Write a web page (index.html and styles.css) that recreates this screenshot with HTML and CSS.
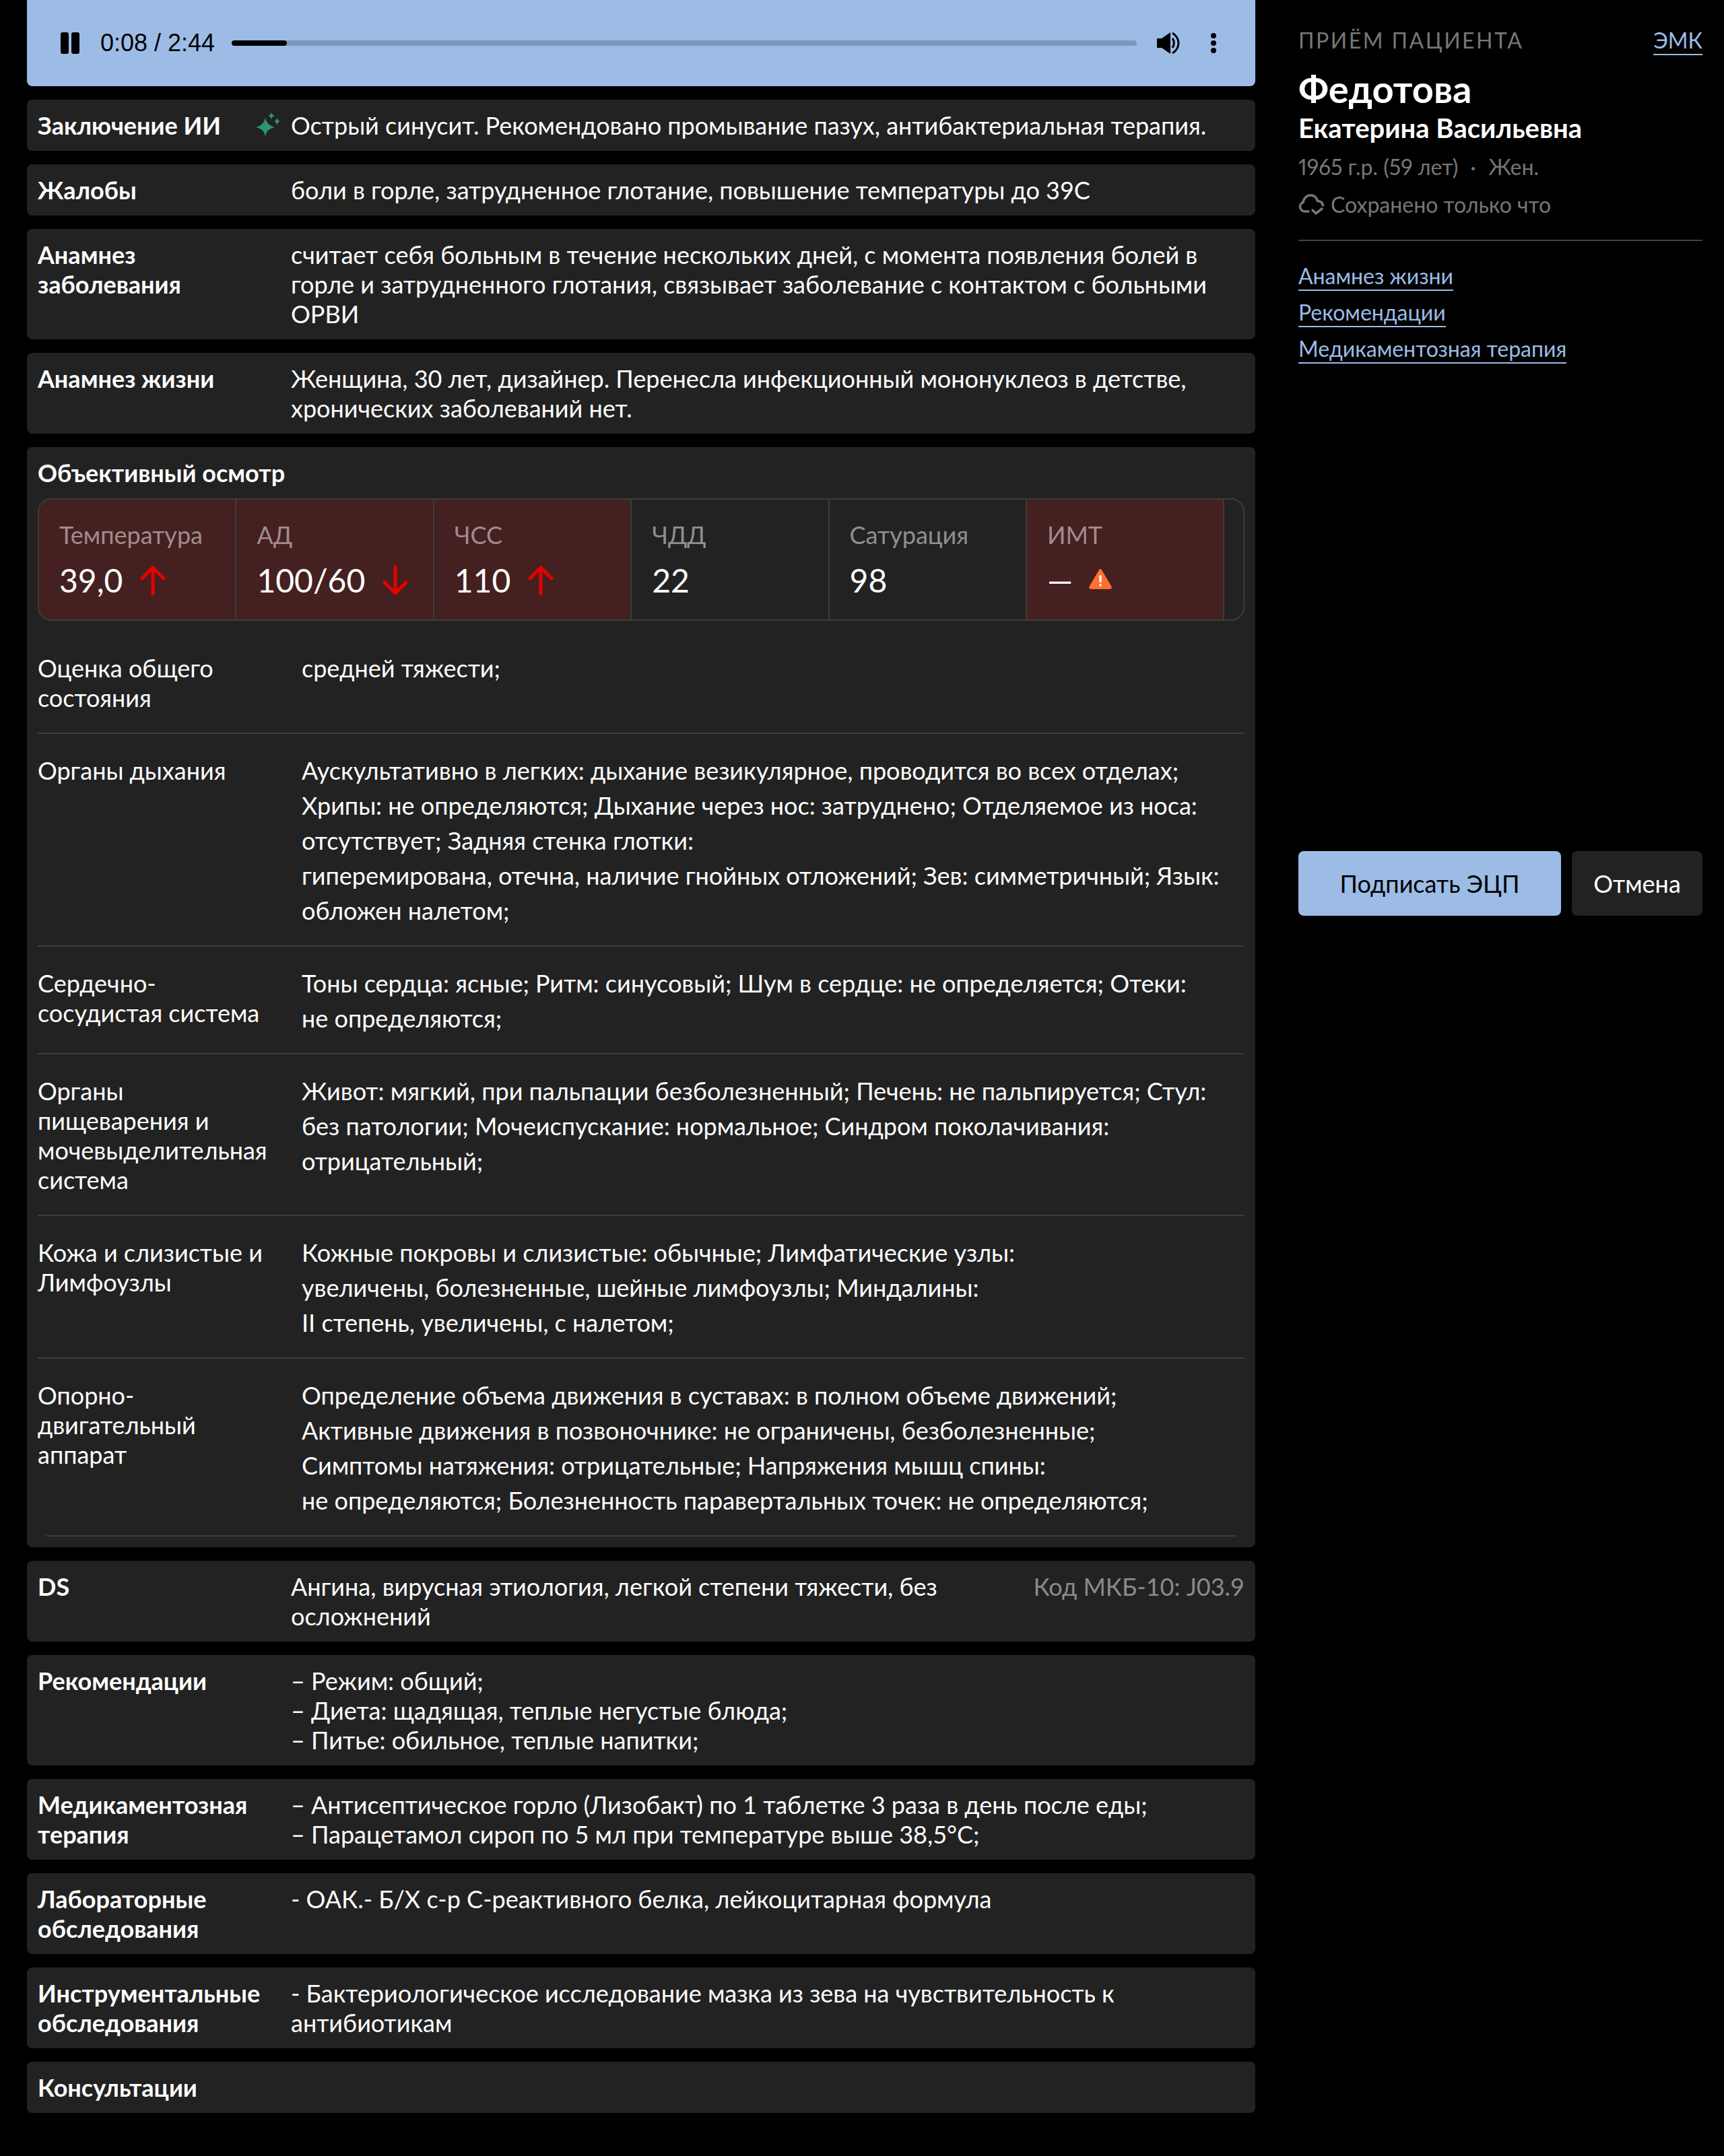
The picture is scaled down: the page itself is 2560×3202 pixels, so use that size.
FILE: index.html
```html
<!doctype html>
<html lang="ru">
	<head>
		<meta charset="utf-8">
		<title>Приём пациента</title>
		<link rel="stylesheet" href="styles.css">
	</head>
	<body>
		<div class="page">
			<main class="content">
				<div class="player">
					<svg class="player-pause" viewBox="0 0 28 32"><rect x="0" y="0" width="12" height="32" rx="3"/><rect x="16" y="0" width="12" height="32" rx="3"/></svg>
					<span class="player-time">0:08 / 2:44</span>
					<div class="player-track"><div class="player-progress"></div></div>
					<svg class="player-volume" viewBox="0 0 36 32"><path d="M0 9h7L20 0v32L7 23H0z"/><path d="M23 9c3 4 3 10 0 14" fill="none" stroke="#000" stroke-width="3"/><path d="M23 1c12 8 12 22 0 30" fill="none" stroke="#000" stroke-width="3"/></svg>
					<svg class="player-menu" viewBox="0 0 8 30"><circle cx="4" cy="4" r="4"/><circle cx="4" cy="15" r="4"/><circle cx="4" cy="26" r="4"/></svg>
				</div>

				<div class="row">
					<div class="row-label">Заключение ИИ</div>
					<div class="row-value ai-value">
						<svg class="ai-icon" viewBox="0 0 36 36"><path fill="#2c9470" d="M14 8Q16 19 28 22 16 24 14 36 12 24 0 22 12 19 14 8z"/><path fill="#2c9470" d="M23 0Q24 4 28 5 24 6 23 10 22 6 18 5 22 4 23 0zM31.500 8Q32.500 12 36 13 32.500 14 31.500 19 30.500 14 27 13 30.500 12 31.500 8z"/></svg>
						Острый синусит. Рекомендовано промывание пазух, антибактериальная терапия.
					</div>
				</div>
				<div class="row">
					<div class="row-label">Жалобы</div>
					<div class="row-value">боли в горле, затрудненное глотание, повышение температуры до 39С</div>
				</div>
				<div class="row">
					<div class="row-label">Анамнез заболевания</div>
					<div class="row-value">считает себя больным в течение нескольких дней, с момента появления болей в<br>горле и затрудненного глотания, связывает заболевание с контактом с больными<br>ОРВИ</div>
				</div>
				<div class="row">
					<div class="row-label">Анамнез жизни</div>
					<div class="row-value">Женщина, 30 лет, дизайнер. Перенесла инфекционный мононуклеоз в детстве,<br>хронических заболеваний нет.</div>
				</div>

				<section class="exam">
					<div class="row-label">Объективный осмотр</div>
					<div class="metrics">
						<div class="metric alert">
							<div class="metric-name">Температура</div>
							<div class="metric-value">39,0 <svg class="arrow" viewBox="0 0 38 44"><path d="M19 42V3M3 19L19 3l16 16" fill="none" stroke="#e60000" stroke-width="5" stroke-linecap="round" stroke-linejoin="round"/></svg></div>
						</div>
						<div class="metric alert">
							<div class="metric-name">АД</div>
							<div class="metric-value">100/60 <svg class="arrow" viewBox="0 0 38 44"><path d="M19 2v39M3 25l16 16 16-16" fill="none" stroke="#e60000" stroke-width="5" stroke-linecap="round" stroke-linejoin="round"/></svg></div>
						</div>
						<div class="metric alert">
							<div class="metric-name">ЧСС</div>
							<div class="metric-value">110 <svg class="arrow" viewBox="0 0 38 44"><path d="M19 42V3M3 19L19 3l16 16" fill="none" stroke="#e60000" stroke-width="5" stroke-linecap="round" stroke-linejoin="round"/></svg></div>
						</div>
						<div class="metric">
							<div class="metric-name">ЧДД</div>
							<div class="metric-value">22</div>
						</div>
						<div class="metric">
							<div class="metric-name">Сатурация</div>
							<div class="metric-value">98</div>
						</div>
						<div class="metric alert">
							<div class="metric-name">ИМТ</div>
							<div class="metric-value">— <svg class="warn" viewBox="0 0 34 30"><path fill="#ff6f32" d="M17 0c1 0 1.600.6 2 1.500L33.500 26c.8 2-.2 4-2.500 4H3c-2.300 0-3.300-2-2.500-4L15 1.500C15.400.6 16 0 17 0z"/><rect x="15.300" y="9" width="3.400" height="11" rx="1.700" fill="#fff"/><circle cx="17" cy="24" r="1.900" fill="#fff"/></svg></div>
						</div>
					</div>

					<div class="exam-row">
						<div class="exam-label">Оценка общего состояния</div>
						<div class="exam-value">средней тяжести;</div>
					</div>
					<div class="exam-row">
						<div class="exam-label">Органы дыхания</div>
						<div class="exam-value">Аускультативно в легких: дыхание везикулярное, проводится во всех отделах;<br>Хрипы: не определяются; Дыхание через нос: затруднено; Отделяемое из носа:<br>отсутствует; Задняя стенка глотки:<br>гиперемирована, отечна, наличие гнойных отложений; Зев: симметричный; Язык:<br>обложен налетом;</div>
					</div>
					<div class="exam-row">
						<div class="exam-label">Сердечно-сосудистая система</div>
						<div class="exam-value">Тоны сердца: ясные; Ритм: синусовый; Шум в сердце: не определяется; Отеки:<br>не определяются;</div>
					</div>
					<div class="exam-row">
						<div class="exam-label">Органы пищеварения и мочевыделительная система</div>
						<div class="exam-value">Живот: мягкий, при пальпации безболезненный; Печень: не пальпируется; Стул:<br>без патологии; Мочеиспускание: нормальное; Синдром поколачивания:<br>отрицательный;</div>
					</div>
					<div class="exam-row">
						<div class="exam-label">Кожа и слизистые и Лимфоузлы</div>
						<div class="exam-value">Кожные покровы и слизистые: обычные; Лимфатические узлы:<br>увеличены, болезненные, шейные лимфоузлы; Миндалины:<br>II степень, увеличены, с налетом;</div>
					</div>
					<div class="exam-row last">
						<div class="exam-label">Опорно-двигательный аппарат</div>
						<div class="exam-value">Определение объема движения в суставах: в полном объеме движений;<br>Активные движения в позвоночнике: не ограничены, безболезненные;<br>Симптомы натяжения: отрицательные; Напряжения мышц спины:<br>не определяются; Болезненность паравертальных точек: не определяются;</div>
					</div>
				</section>

				<div class="row">
					<div class="row-label">DS</div>
					<div class="row-value ds-value">
						<div class="ds-text">Ангина, вирусная этиология, легкой степени тяжести, без осложнений</div>
						<div class="ds-code">Код МКБ-10: J03.9</div>
					</div>
				</div>
				<div class="row">
					<div class="row-label">Рекомендации</div>
					<div class="row-value">– Режим: общий;<br>– Диета: щадящая, теплые негустые блюда;<br>– Питье: обильное, теплые напитки;</div>
				</div>
				<div class="row">
					<div class="row-label">Медикаментозная терапия</div>
					<div class="row-value">– Антисептическое горло (Лизобакт) по 1 таблетке 3 раза в день после еды;<br>– Парацетамол сироп по 5 мл при температуре выше 38,5°С;</div>
				</div>
				<div class="row">
					<div class="row-label">Лабораторные обследования</div>
					<div class="row-value">- ОАК.- Б/Х с-р С-реактивного белка, лейкоцитарная формула</div>
				</div>
				<div class="row">
					<div class="row-label">Инструментальные обследования</div>
					<div class="row-value">- Бактериологическое исследование мазка из зева на чувствительность к<br>антибиотикам</div>
				</div>
				<div class="row">
					<div class="row-label">Консультации</div>
					<div class="row-value"></div>
				</div>
			</main>

			<aside class="side">
				<div class="side-top">
					<span class="side-title">ПРИЁМ ПАЦИЕНТА</span>
					<a class="link" href="#">ЭМК</a>
				</div>
				<div class="surname">Федотова</div>
				<div class="given-name">Екатерина Васильевна</div>
				<div class="side-meta">1965 г.р. (59 лет)<span class="side-dot">·</span>Жен.</div>
				<div class="side-saved">
					<svg class="cloud" viewBox="0 0 38 32"><path d="M15 26H9a7 7 0 0 1-2-13.500C8 6 13 2 18 2c5 0 9 3 10.500 8.500 3.500 0 7 2 8 6.500" fill="none" stroke="#777" stroke-width="3.500" stroke-linecap="round"/><path d="M21 24l5 5 9-7" fill="none" stroke="#777" stroke-width="3.500" stroke-linecap="round" stroke-linejoin="round"/></svg>
					Сохранено только что
				</div>
				<div class="side-links">
					<a class="link" href="#">Анамнез жизни</a>
					<a class="link" href="#">Рекомендации</a>
					<a class="link" href="#">Медикаментозная терапия</a>
				</div>
				<div class="side-actions">
					<button class="btn btn-primary">Подписать ЭЦП</button>
					<button class="btn">Отмена</button>
				</div>
			</aside>
		</div>
	</body>
</html>
```

FILE: styles.css
```css
* {
	box-sizing: border-box;
}
body {
	margin: 0;
	background: #000;
	color: #fff;
	font-family: "Lato", "Noto Sans", sans-serif;
	font-size: 36px;
	line-height: 44px;
}
.page {
	display: flex;
	align-items: flex-start;
	height: 3202px;
	padding-left: 40px;
}
.content {
	width: 1824px;
	display: flex;
	flex-direction: column;
	gap: 20px;
}

.player {
	height: 128px;
	display: flex;
	align-items: center;
	background: #9cbce6;
	border-radius: 0 0 8px 8px;
	color: #000;
	padding-left: 50px;
}
.player-pause {
	width: 28px;
	height: 32px;
	flex: none;
}
.player-time {
	font-family: "Liberation Sans", sans-serif;
	margin-left: 31px;
	width: 195px;
}
.player-track {
	width: 1344px;
	height: 8px;
	background: #7d96bb;
	border-radius: 4px;
}
.player-progress {
	width: 82px;
	height: 8px;
	background: #000;
	border-radius: 4px;
}
.player-volume {
	width: 36px;
	height: 32px;
	margin-left: 30px;
}
.player-menu {
	width: 8px;
	height: 30px;
	margin-left: 44px;
}

.row {
	display: grid;
	grid-template-columns: 376px 1fr;
	padding: 16px;
	background: #222;
	border-radius: 8px;
}
.row-label {
	font-weight: 700;
	padding-right: 30px;
}
.ai-value {
	position: relative;
}
.ai-icon {
	position: absolute;
	left: -52px;
	top: 3px;
	width: 36px;
	height: 36px;
}
.ds-value {
	display: flex;
	justify-content: space-between;
}
.ds-text {
	width: 1010px;
}
.ds-code {
	color: #8a8a8a;
}

.exam {
	background: #222;
	border-radius: 8px;
	padding: 16px;
}
.metrics {
	display: flex;
	height: 182px;
	margin-top: 16px;
	margin-bottom: 16px;
	border: 2px solid #3c3c3c;
	border-radius: 20px;
	overflow: hidden;
}
.metric {
	width: 293.4px;
	padding: 30px 30px 0;
	border-right: 2px solid #3c3c3c;
}
.metric.alert {
	background: #452020;
}
.metric-name {
	color: #8f8f8f;
}
.metric.alert .metric-name {
	color: #a08c8c;
}
.metric-value {
	margin-top: 16px;
	font-size: 48px;
	line-height: 60px;
	display: flex;
	align-items: center;
	gap: 26px;
}
.arrow {
	width: 38px;
	height: 44px;
}
.warn {
	width: 34px;
	height: 30px;
	margin-top: -4px;
	margin-left: -2px;
}

.exam-row {
	display: grid;
	grid-template-columns: 392px 1fr;
	padding-top: 28px;
	border-bottom: 2px solid #3c3c3c;
}
.exam-row.last {
	margin: 0 9px;
	grid-template-columns: 383px 1fr;
	border-bottom: 0;
}
.exam-row.last::after {
	content: "";
	grid-column: 1 / -1;
	height: 2px;
	background: #3c3c3c;
	clip-path: polygon(0 50%, 6px 0, calc(100% - 6px) 0, 100% 50%, calc(100% - 6px) 100%, 6px 100%);
}
.exam-row.last .exam-label {
	margin-left: -9px;
}
.exam-label {
	margin: 4px 0 30px;
	padding-right: 32px;
}
.exam-value {
	line-height: 52px;
	margin-bottom: 26px;
}

.side {
	width: 600px;
	margin-left: 64px;
	height: 1360px;
	display: flex;
	flex-direction: column;
	font-size: 32px;
	line-height: 40px;
}
.side-top {
	display: flex;
	justify-content: space-between;
	align-items: flex-start;
	padding-top: 40px;
}
.side-title {
	color: #777;
	letter-spacing: 2.5px;
}
.link {
	color: #9cbce6;
	text-decoration: none;
	border-bottom: 2px solid #9cbce6;
}
.surname {
	font-size: 56px;
	line-height: 68px;
	font-weight: 700;
	margin-top: 16px;
}
.given-name {
	font-size: 40px;
	line-height: 48px;
	font-weight: 700;
}
.side-meta {
	color: #777;
	margin-top: 14px;
	font-variant-numeric: proportional-nums;
}
.side-dot {
	margin: 0 19px 0 18px;
}
.side-saved {
	color: #777;
	display: flex;
	align-items: center;
	gap: 10px;
	margin-top: 16px;
	padding-bottom: 32px;
	border-bottom: 2px solid #444;
}
.cloud {
	width: 38px;
	height: 32px;
}
.side-links {
	display: flex;
	flex-direction: column;
	align-items: flex-start;
	gap: 12px;
	margin-top: 32px;
}
.side-actions {
	display: flex;
	gap: 16px;
	margin-top: auto;
}
.btn {
	height: 96px;
	width: 194px;
	background: #222;
	color: #fff;
	border: 0;
	border-radius: 8px;
	font: inherit;
	font-size: 36px;
}
.btn-primary {
	width: 390px;
	background: #9cbce6;
	color: #000;
}
```
